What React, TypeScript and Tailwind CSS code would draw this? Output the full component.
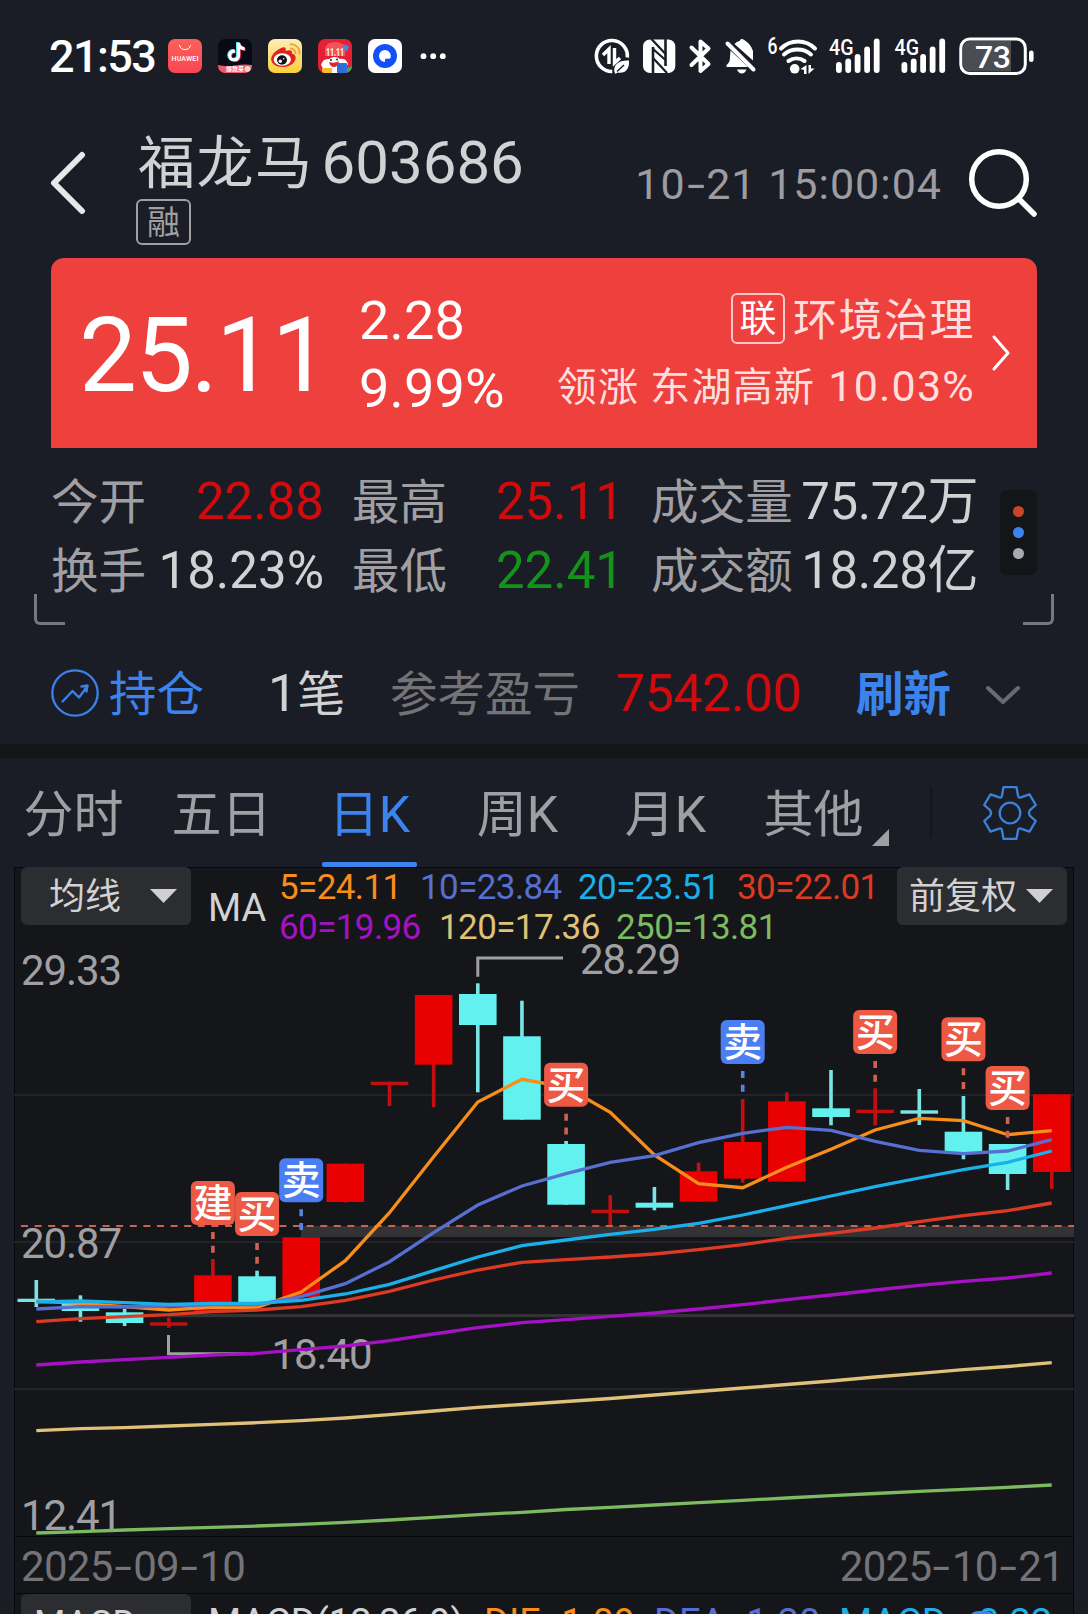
import { FaTiktok } from "react-icons/fa6";

const STEP = 44.15;
const FIRST_X = 36.3;
const RED = "#e90000";
const CYAN = "#62f1ef";

const xAt = (i: number) => FIRST_X + i * STEP;

// [body top, body bottom, wick top, wick bottom, up]
const candles: [number, number, number, number, boolean][] = [
  [1298.7, 1302, 1280, 1307, false],
  [1304, 1311, 1295.3, 1321.7, false],
  [1312.3, 1323, 1309, 1326, false],
  [1322.3, 1325.7, 1317.7, 1327.7, true],
  [1275.3, 1312, 1259, 1312, true],
  [1276.3, 1303.3, 1270.7, 1303.3, false],
  [1237.3, 1297, 1237.3, 1297, true],
  [1163.7, 1202, 1163.7, 1202.5, true],
  [1081.7, 1085, 1081.7, 1106, true],
  [995, 1064.7, 995, 1107.3, true],
  [994, 1025, 983.3, 1092.3, false],
  [1036.3, 1119.7, 1000.7, 1119.7, false],
  [1144, 1204.7, 1141, 1204.7, false],
  [1209.7, 1213, 1195.3, 1225.7, true],
  [1202.7, 1207.7, 1187, 1210.3, false],
  [1171.3, 1201.7, 1162.7, 1201.7, true],
  [1142, 1178.7, 1099, 1182.7, true],
  [1101.3, 1181.7, 1092.3, 1181.7, true],
  [1108.3, 1117, 1070, 1125.3, false],
  [1109.7, 1113, 1088.3, 1125.3, true],
  [1110.3, 1113.7, 1089, 1125, false],
  [1131.7, 1153.7, 1096, 1159.3, false],
  [1144, 1174, 1144, 1190, false],
  [1094.3, 1172, 1094.3, 1189, true],
];

const lines = [
  {
    color: "#f78d1a",
    ys: [1301, 1303.3, 1306.7, 1310, 1307, 1307.3, 1292, 1260.7, 1212.7, 1156.7, 1102, 1079.3, 1087, 1112.3, 1155, 1183.7, 1187.7, 1167.3, 1149.3, 1130, 1118.3, 1120.7, 1134.7, 1130.7],
  },
  {
    color: "#566fd0",
    ys: [1309, 1306.7, 1307, 1306, 1304.7, 1304.7, 1296.7, 1283.7, 1261.7, 1232.7, 1205, 1186, 1173.7, 1162.3, 1155.7, 1142.7, 1133.3, 1127.3, 1130.3, 1141.3, 1150.3, 1153.7, 1151, 1139.7],
  },
  {
    color: "#1cb0ea",
    ys: [1302, 1301, 1302.7, 1304.3, 1303.3, 1303.3, 1300.3, 1294, 1284.3, 1270.7, 1257, 1245.7, 1240, 1234.3, 1229.3, 1223.3, 1215, 1205.7, 1196, 1186.7, 1178, 1169.7, 1162.3, 1151],
  },
  {
    color: "#dc3a22",
    ys: [1321.7, 1318.7, 1316.7, 1314.7, 1311.7, 1310, 1306.7, 1300.3, 1291.3, 1280, 1270, 1262.3, 1259.7, 1257, 1254, 1249.7, 1244.7, 1238.3, 1233.3, 1228, 1221.7, 1215.7, 1210.7, 1203],
  },
  {
    color: "#a512c4",
    ys: [1365, 1362, 1359.7, 1357.3, 1355, 1353.3, 1349.7, 1346, 1340.7, 1334, 1327.7, 1322.7, 1319.7, 1316.3, 1313, 1309, 1304.7, 1299.7, 1295, 1290, 1285.3, 1281.3, 1278, 1273],
  },
  {
    color: "#dfc178",
    ys: [1430.7, 1428.7, 1427.7, 1426, 1424.3, 1422.7, 1420.7, 1418, 1414.7, 1411, 1407.3, 1404.5, 1401.5, 1398.5, 1395, 1391.5, 1388, 1384.5, 1381, 1377, 1373.3, 1369.7, 1366.5, 1362.7],
  },
  {
    color: "#7dba61",
    ys: [1533, 1531.7, 1530, 1528.7, 1527.3, 1526, 1524.3, 1522.3, 1520, 1517.3, 1514.7, 1512.3, 1509.5, 1507.3, 1505, 1502.7, 1500.3, 1498, 1495.7, 1493.5, 1491.3, 1489.3, 1487.3, 1485],
  },
];

// [candle index, tag top, label]
const marks: [number, number, string][] = [
  [4, 1181, "建"],
  [5, 1192, "买"],
  [6, 1158.3, "卖"],
  [12, 1062.7, "买"],
  [16, 1020, "卖"],
  [19, 1010, "买"],
  [21, 1017.3, "买"],
  [22, 1066, "买"],
];

const legend = [
  [
    ["5=24.11", "text-[#f78d1a]", "w-[141px]"],
    ["10=23.84", "text-[#566fd0]", "w-[158px]"],
    ["20=23.51", "text-[#1cb0ea]", "w-[159px]"],
    ["30=22.01", "text-[#dc3a22]", "w-[150px]"],
  ],
  [
    ["60=19.96", "text-[#a512c4]", "w-[160px]"],
    ["120=17.36", "text-[#dfc178]", "w-[177px]"],
    ["250=13.81", "text-[#7dba61]", "w-[170px]"],
  ],
];

const tabs = ["分时", "五日", "日K", "周K", "月K", "其他"];

function AppIcons() {
  return (
    <svg width="276" height="34" viewBox="0 0 276 34" className="ml-[13px] overflow-visible">
      <defs>
        <linearGradient id="weibo" x1="0" y1="0" x2="0" y2="1">
          <stop offset="0" stopColor="#fdeeb8" />
          <stop offset="1" stopColor="#fbcf3a" />
        </linearGradient>
        <linearGradient id="mall" x1="0" y1="0" x2="0" y2="1">
          <stop offset="0" stopColor="#fb6158" />
          <stop offset="1" stopColor="#fb4653" />
        </linearGradient>
        <clipPath id="round">
          <rect width="34" height="34" rx="7" />
        </clipPath>
      </defs>
      <g>
        <rect width="34" height="34" rx="7" fill="url(#mall)" />
        <path d="M11.500 6a5.600 5.600 0 0 0 11 0" fill="none" stroke="#fff" strokeWidth="1" />
        <text x="17" y="22.300" textAnchor="middle" fontSize="7" fontWeight="500" fill="#fff" textLength="27">HUAWEI</text>
      </g>
      <g transform="translate(50 0)" clipPath="url(#round)">
        <rect width="34" height="34" fill="#070a14" />
        <FaTiktok x="8" y="3" size={19} color="#29e5e2" />
        <FaTiktok x="9.600" y="4.200" size={19} color="#f5305c" />
        <FaTiktok x="8.800" y="3.600" size={19} color="#fff" />
        <path d="M0 26q8 2 17 .5T34 26v8H0z" fill="#ee5a69" />
        <text x="8" y="32.300" fontSize="6" fontWeight="700" fill="#fff">爆款来</text>
        <circle cx="29.500" cy="30" r="3" fill="#fbd7c5" />
      </g>
      <g transform="translate(100 0)">
        <rect width="34" height="34" rx="7" fill="url(#weibo)" />
        <path d="M22.500 5.200a8.500 8.500 0 0 1 9 9.500M22.800 9.500a4.600 4.600 0 0 1 4.600 5" fill="none" stroke="#f2a63a" strokeWidth="2" strokeLinecap="round" />
        <path d="M14.500 8.500c2.200-1 4 .5 3.200 3.500 3.500-1.500 7-1.200 6.300 2.500 3.500 1.300 4.300 3.500 3.200 6.500C25.500 25.500 20 28 14.500 28 8 28 3.200 24.700 3.200 20c0-4.700 6.600-10.300 11.300-11.500z" fill="#e0241d" />
        <ellipse cx="14.300" cy="20.500" rx="8.600" ry="6.200" fill="#fff" />
        <ellipse cx="14" cy="21" rx="5" ry="4.700" fill="#111" />
        <circle cx="12.300" cy="22.300" r="1.700" fill="#fff" />
        <circle cx="15.700" cy="19.800" r=".8" fill="#fff" />
      </g>
      <g transform="translate(150 0)" clipPath="url(#round)">
        <rect width="34" height="34" fill="#e51f35" />
        <path d="M7 17V9q2-6 10-6t10 6v8z" fill="#f0535c" />
        <path d="M25 5l6 2-2 6-4-3z" fill="#4d84d8" />
        <text x="17" y="17" textAnchor="middle" fontSize="11" fontWeight="700" fill="#fff" textLength="18" lengthAdjust="spacingAndGlyphs">11.11</text>
        <path d="M3 26q2-7 8-6 6-4 11 0 6-1 8 5l-6 9H8z" fill="#fff" />
        <path d="M11 23q6 2 10-1-1 6-5 6t-5-5z" fill="#d92a2f" />
        <circle cx="13" cy="21" r="1" fill="#222" />
        <circle cx="19" cy="20.500" r="1" fill="#222" />
        <rect x="4" y="29" width="10" height="5" fill="#f6bd2b" />
        <rect x="19" y="24" width="10" height="10" rx="1" fill="#2d6edb" />
        <path d="M29 29l5-2v7h-5z" fill="#2db34a" />
      </g>
      <g transform="translate(200 0)">
        <rect width="34" height="34" rx="7" fill="#fff" />
        <circle cx="17" cy="17" r="12" fill="#1450f5" />
        <path d="M17 11a6 6 0 1 0 0 12q-.6-3.400 1.500-3.600 2.300 .6 4-.2A6 6 0 0 0 17 11z" fill="#fff" />
      </g>
      <g fill="#fff">
        <circle cx="255.500" cy="17.200" r="2.900" />
        <circle cx="265.200" cy="17.200" r="2.900" />
        <circle cx="274.800" cy="17.200" r="2.900" />
      </g>
    </svg>
  );
}

function Signal() {
  return (
    <>
      <text x="0" y="16.500" fontSize="22" fontWeight="500" textLength="24.500" lengthAdjust="spacingAndGlyphs">4G</text>
      <rect x="7" y="23.500" width="5.800" height="11" rx="2.900" />
      <rect x="16.300" y="20" width="5.800" height="14.500" rx="2.900" />
      <rect x="25.700" y="15.500" width="5.800" height="19" rx="2.900" />
      <rect x="35.200" y="8" width="5.800" height="26.500" rx="2.900" />
      <rect x="44.800" y="0" width="5.800" height="34.500" rx="2.900" />
    </>
  );
}

function SystemIcons() {
  return (
    <svg width="440" height="38" viewBox="594 37 440 38" fill="#fff" className="ml-auto overflow-visible">
      {/* data saver */}
      <path d="M627.300 57.500a15.500 15.500 0 1 0-15 14" fill="none" stroke="#fff" strokeWidth="3.600" />
      <path d="M603 55l6-6v15M614.500 48v15l5.500-5" fill="none" stroke="#fff" strokeWidth="3.400" />
      <path d="M614.500 72c-1.500-7 4-12 14.500-11.500 .6 9-4 13.500-11.500 12l-2 1.500z" />
      <path d="M617 71.500l7-6.500" stroke="#1b1d26" strokeWidth="1.500" />
      {/* nfc */}
      <rect x="643" y="39.500" width="32.300" height="33.500" rx="7" />
      <path d="M653 47v26.500M665.500 39v27" stroke="#1b1d26" strokeWidth="2.600" />
      <path d="M651 38.500l15 16M653 49l12.500 11M653 58l14 15" stroke="#1b1d26" strokeWidth="2.200" />
      {/* bluetooth */}
      <path d="M691.500 47.500l17 16.500-8 7V41.500l8 7-17 16.500" fill="none" stroke="#fff" strokeWidth="4" strokeLinejoin="round" strokeLinecap="round" />
      {/* muted bell */}
      <path d="M730.500 50.500l17.500 16.500h-21.500v-2q3.500-2.500 3.500-8zM734.500 44q2-2.500 5-3 1-2.500 3-2 8 4 10.500 12v9.500z" />
      <path d="M737 69.500h9.500q-1.500 4-4.700 4t-4.800-4z" />
      <path d="M727.500 43.500l26 26" stroke="#fff" strokeWidth="4" strokeLinecap="round" />
      {/* wifi 6 */}
      <text x="767.500" y="54" fontSize="23" fontWeight="500" textLength="10" lengthAdjust="spacingAndGlyphs">6</text>
      <g fill="none" stroke="#fff" strokeWidth="4" strokeLinecap="round">
        <path d="M781 48.500a24 24 0 0 1 34 0" />
        <path d="M784 54.500a21 21 0 0 1 27 0" />
        <path d="M788.500 61a14 14 0 0 1 16 0" />
      </g>
      <circle cx="794.700" cy="68.800" r="4.800" />
      <path d="M800.500 69l6-4v9h-2.500v-4zM808.500 65v9l6-5.500h-3.500V65z" />
      <g transform="translate(829 38.500)">
        <Signal />
      </g>
      <g transform="translate(894.500 38.500)">
        <Signal />
      </g>
      {/* battery */}
      <rect x="960.800" y="39" width="64.500" height="34.500" rx="9" fill="#1b1d26" stroke="#fff" strokeWidth="3" />
      <path d="M1011 41v30.500H970q-7-.5-7-7v-16.500q0-6.500 7-7z" fill="#4b4d54" />
      <rect x="1029" y="50.500" width="4.600" height="11.500" rx="2.300" />
      <text x="975" y="67.500" fontSize="32" fontWeight="500" textLength="36">73</text>
    </svg>
  );
}

function Chart() {
  return (
    <svg width="1060" height="593" viewBox="14 943 1060 593" className="block overflow-visible">
      <g stroke="#222328" strokeWidth="2">
        <path d="M14 1095H1074" />
        <path d="M14 1242H1074" />
        <path d="M14 1389H1074" />
      </g>
      <path d="M168 1315.700H1074" stroke="#333336" strokeWidth="3.300" />
      <rect x="301" y="1226" width="773" height="11" fill="#333335" />

      <g fontSize="42" fill="#a0a0a3">
        <text x="21" y="985" textLength="101">29.33</text>
        <text x="21" y="1258" textLength="101">20.87</text>
        <text x="21" y="1530" textLength="101">12.41</text>
        <text x="580" y="974" textLength="101">28.29</text>
        <text x="271.500" y="1369" textLength="101">18.40</text>
      </g>
      <g fill="none" stroke="#a0a0a3" strokeWidth="3">
        <path d="M477.800 976.700V958H563" />
        <path d="M168.500 1335v18.700H255" />
      </g>

      {candles.map(([top, bottom, high, low, up], i) => (
        <g key={i} fill={up ? RED : CYAN}>
          <rect x={xAt(i) - 1.8} y={high} width="3.600" height={low - high} fill={up ? "#c40f10" : "#78e5e4"} />
          <rect x={xAt(i) - 18.8} y={top} width="37.600" height={bottom - top} fill={bottom - top < 4 ? (up ? "#c40f10" : "#78e5e4") : undefined} />
        </g>
      ))}

      <path d="M21 1226H1074" stroke="#c66353" strokeWidth="2" strokeDasharray="7 6.600" />

      {lines.map((line) => (
        <polyline
          key={line.color}
          points={line.ys.map((y, i) => `${xAt(i)},${y}`).join(" ")}
          fill="none"
          stroke={line.color}
          strokeWidth="3.300"
        />
      ))}

      {marks.map(([i, y, label]) => {
        const sell = label === "卖";
        return (
          <g key={i}>
            <path
              d={`M${xAt(i)} ${y + 51}v21`}
              stroke={sell ? "#5b83dd" : "#d0604f"}
              strokeWidth="3.600"
              strokeDasharray="7 6.700"
            />
            <rect x={xAt(i) - 22} y={y} width="44" height="44" rx="6" fill={sell ? "#4c7ef3" : "#ed5945"} />
            <text x={xAt(i)} y={y + 36} textAnchor="middle" fontSize="39" fontWeight="500" fill="#fff">
              {label}
            </text>
          </g>
        );
      })}
    </svg>
  );
}

function DateText({ value }: { value: string }) {
  return (
    <span>
      {value.split(/(-)/).map((part, i) =>
        part === "-" ? (
          <span key={i} className="inline-block w-[20.500px] scale-x-150 text-center tracking-normal">-</span>
        ) : (
          part
        )
      )}
    </span>
  );
}

function Stat({ label, value, color = "text-[#d2d2d4]" }: { label: string; value: string; color?: string }) {
  return (
    <div className="flex items-baseline justify-between">
      <span className="text-[47.500px] text-[#a0a0a4]">{label}</span>
      <span className={color}>{value}</span>
    </div>
  );
}

function Dropdown({ label, className }: { label: string; className: string }) {
  return (
    <button className={`flex h-[58px] w-[170px] shrink-0 items-center justify-between rounded-[6px] bg-[#2c2d31] pr-[14px] text-[36px] text-[#d2d2d2] ${className}`}>
      <span className="whitespace-nowrap pt-[2px] leading-[58px]">{label}</span>
      <svg width="27" height="14" viewBox="0 0 27 14" fill="#d0d0d0">
        <path d="M0 0h27L13.500 14z" />
      </svg>
    </button>
  );
}

export default function App() {
  return (
    <main className="h-[1614px] w-[1088px] overflow-hidden bg-[#1b1d26] font-['Roboto','Noto_Sans_CJK_SC',sans-serif] text-[#d2d2d4]">
      <div className="flex h-[112px] items-center pl-[49px] pr-[54px]">
        <span className="w-[106px] whitespace-nowrap pt-[2px] text-[45px] font-medium leading-[46px] tracking-[-1.600px] text-white">21:53</span>
        <AppIcons />
        <SystemIcons />
      </div>

      <header className="flex h-[146px] items-start pl-[50px] pr-[51px]">
        <svg width="36" height="64" viewBox="0 0 36 64" fill="none" stroke="#e8e8ea" strokeWidth="6" strokeLinecap="round" strokeLinejoin="round" className="mt-[39px]">
          <path d="M32 4L4 32l28 28" />
        </svg>
        <div className="ml-[50px] mt-[21px] flex flex-col items-start">
          <h1 className="flex items-baseline whitespace-nowrap text-[60px] leading-[60px]">
            <span className="ml-[2px] text-[57px] tracking-[1.500px]">福龙马</span>
            <span className="ml-[8px]">603686</span>
          </h1>
          <span className="mt-[5px] flex h-[46px] w-[55px] items-center justify-center rounded-[6px] border-2 border-[#a0a0a4] text-[33px] leading-none text-[#a0a0a4]">融</span>
        </div>
        <span className="ml-auto mr-[26px] mt-[50px] whitespace-pre text-[43px] leading-[44px] tracking-[1px] text-[#9c9ca1]">
          <DateText value="10-21 15:00:04" />
        </span>
        <svg width="69" height="70" viewBox="0 0 69 70" fill="none" stroke="#fff" strokeWidth="5.500" strokeLinecap="round" className="mt-[36px]">
          <circle cx="31" cy="31" r="27.300" />
          <path d="M51 51l15 15" />
        </svg>
      </header>

      <section className="mx-[51px] flex h-[190px] items-start rounded-t-[13px] bg-[#ee403d] text-white">
        <span className="ml-[28px] mt-[46px] w-[240px] text-[103px] leading-[104px] tracking-[-2px]">25.11</span>
        <div className="ml-[40px] mt-[29px] flex flex-col text-[54px] leading-[68px] tracking-[0.200px]">
          <span>2.28</span>
          <span>9.99%</span>
        </div>
        <div className="ml-auto mt-[35px] flex flex-col items-end text-[#ffdedd]">
          <div className="flex h-[51px] items-center">
            <span className="flex h-[51px] w-[54px] items-center justify-center rounded-[6px] border-2 border-[#ffc9c7] pt-px text-[37px] leading-none text-white">联</span>
            <span className="ml-[8px] pt-[4px] text-[44px] leading-[56px] tracking-[1.500px]">环境治理</span>
          </div>
          <div className="mt-[14px] flex items-baseline whitespace-pre text-[40px] leading-[56px] tracking-[1.200px]">
            领涨 东湖高新 <span className="ml-[2px] text-[43px]">10.03%</span>
          </div>
        </div>
        <svg width="20" height="38" viewBox="0 0 20 38" fill="none" stroke="#fff" strokeWidth="3" strokeLinecap="round" strokeLinejoin="round" className="ml-[16px] mr-[26px] mt-[76px]">
          <path d="M3 3l14 16L3 35" />
        </svg>
      </section>

      <section className="relative flex h-[177px] items-start whitespace-nowrap pl-[51px] pr-[51px] pt-[20px] text-[51px] leading-[68px]">
        <div className="w-[273px]">
          <Stat label="今开" value="22.88" color="text-[#d10b0d]" />
          <Stat label="换手" value="18.23%" />
        </div>
        <div className="ml-[28px] w-[272px]">
          <Stat label="最高" value="25.11" color="text-[#d10b0d]" />
          <Stat label="最低" value="22.41" color="text-[#13931a]" />
        </div>
        <div className="ml-[27px] w-[327px] tracking-[-0.400px]">
          <Stat label="成交量" value="75.72万" />
          <Stat label="成交额" value="18.28亿" />
        </div>
        <button className="ml-auto mt-[22px] flex h-[85px] w-[37px] flex-col items-center justify-center gap-[10.500px] rounded-[7px] bg-[#141519]">
          <i className="size-[10.500px] rounded-full bg-[#c8452c]" />
          <i className="size-[10.500px] rounded-full bg-[#3b84ee]" />
          <i className="size-[10.500px] rounded-full bg-[#a9a9b0]" />
        </button>
        <i className="absolute bottom-0 left-[34px] h-[31px] w-[31px] rounded-bl-[6px] border-b-[3px] border-l-[3px] border-[#77787c]" />
        <i className="absolute bottom-0 right-[34px] h-[31px] w-[31px] rounded-br-[6px] border-b-[3px] border-r-[3px] border-[#77787c]" />
      </section>

      <section className="flex h-[119px] items-baseline whitespace-nowrap pl-[51px] pt-[39px] text-[52px] leading-[60px]">
        <svg width="48" height="48" viewBox="0 0 48 48" fill="none" stroke="#3b82ea" strokeWidth="2.300" className="mt-[5px] self-start">
          <circle cx="24" cy="24" r="22.700" />
          <path d="M11.500 32.500l10-10.500 6.500 6.500 8.500-11.500M30.500 17.500l6-1-1 6" strokeLinejoin="round" strokeLinecap="round" />
        </svg>
        <span className="ml-[10px] w-[159px] text-[47.500px] text-[#3b84ee]">持仓</span>
        <span className="w-[122px]">1<span className="text-[48px]">笔</span></span>
        <span className="w-[226px] text-[47.500px] text-[#747478]">参考盈亏</span>
        <span className="w-[240px] tracking-[-0.500px] text-[#d10b0d]">7542.00</span>
        <span className="text-[47.500px] font-bold text-[#3b84ee]">刷新</span>
        <svg width="36" height="20" viewBox="0 0 36 20" fill="none" stroke="#6a6b70" strokeWidth="4" strokeLinecap="round" strokeLinejoin="round" className="ml-[34px] mt-[21px] self-start">
          <path d="M3 3l15 14L33 3" />
        </svg>
      </section>

      <div className="h-[14px] bg-[#141519]" />

      <nav className="flex h-[109px] items-start pt-[27px] text-[50px] leading-[60px] text-[#a0a0a4]">
        {tabs.map((tab) => (
          <button key={tab} className={`relative flex h-[82px] w-[148px] shrink-0 items-start justify-center pr-px ${tab === "日K" ? "text-[#3b84ee]" : ""}`}>
            <span>{tab}</span>
            {tab === "日K" && <i className="absolute bottom-0 left-[26px] h-[5px] w-[95px] rounded-[2px] bg-[#3b84ee]" />}
            {tab === "其他" && (
              <svg width="17" height="17" viewBox="0 0 17 17" fill="#a0a0a4" className="absolute -right-px top-[44px]">
                <path d="M17 0v17H0z" />
              </svg>
            )}
          </button>
        ))}
        <i className="ml-[42px] mt-[2px] h-[51px] w-[2px] bg-[#15161b]" />
        <svg width="54" height="54" viewBox="0 0 54 54" fill="none" stroke="#3b82dd" strokeWidth="2.300" strokeLinejoin="round" className="ml-[51px] mt-px">
          <path d="M20.500 1.200H33.500L35 9.500Q35.500 12.500 38.500 11.200L46.500 8.300 52.800 19 47 24.200Q45 27 47 29.800L52.800 35 46.500 45.700 38.500 42.800Q35.500 41.500 35 44.500L33.500 52.800H20.500L19 44.500Q18.500 41.500 15.500 42.800L7.500 45.700 1.200 35 7 29.800Q9 27 7 24.200L1.200 19 7.500 8.300 15.500 11.200Q18.500 12.500 19 9.500Z" />
          <circle cx="27" cy="27" r="10.300" />
        </svg>
      </nav>

      <section className="mx-[14px] h-[747px] border-x border-t border-[#08080c] bg-[#15161a]">
        <div className="-mt-px flex h-[76px] items-start whitespace-nowrap">
          <Dropdown label="均线" className="ml-[6px] pl-[28px]" />
          <span className="ml-[17px] w-[71px] pt-[20px] text-[38px] leading-[42px]">MA</span>
          <div className="w-[618px] pt-[1px] text-[35px] leading-[39.500px] tracking-[-0.600px]">
            {legend.map((row, i) => (
              <div key={i} className="flex">
                {row.map(([text, color, width]) => (
                  <span key={text} className={`${color} ${width}`}>{text}</span>
                ))}
              </div>
            ))}
          </div>
          <Dropdown label="前复权" className="pl-[12px]" />
        </div>
        <div className="-mx-px">
          <Chart />
        </div>
        <div className="flex h-[58px] items-center justify-between border-y border-[#08080c] pl-[6px] pr-[9px] pt-[3px] text-[42px] leading-[56px] tracking-[-0.700px] text-[#747478]">
          <DateText value="2025-09-10" />
          <DateText value="2025-10-21" />
        </div>
        <div className="flex h-[20px] items-start overflow-hidden whitespace-nowrap text-[38px] leading-[58px]">
          <div className="ml-[6px] h-[58px] w-[170px] shrink-0 rounded-[6px] bg-[#2c2d31] pl-[13px] text-[36px] leading-[60px]">MACD</div>
          <span className="ml-[17px] w-[276px] shrink-0">MACD(12,26,9)</span>
          <span className="w-[170px] shrink-0 text-[#f78d1a]">DIF=1.09</span>
          <span className="w-[185px] shrink-0 text-[#566fd0]">DEA=1.20</span>
          <span className="shrink-0 text-[#1cb0ea]">MACD=-0.22</span>
          <i className="-ml-[84px] mt-[17px] h-[10px] w-[28px] shrink-0 rounded-t-full bg-[#3b84ee]" />
        </div>
      </section>
    </main>
  );
}
